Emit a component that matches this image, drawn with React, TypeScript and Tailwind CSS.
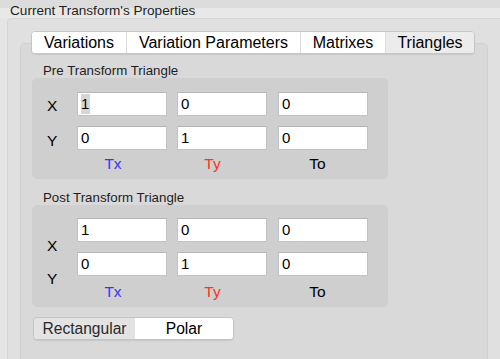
import React from 'react';

const tabs = [
  { label: 'Variations', w: 'w-[95px]' },
  { label: 'Variation Parameters', w: 'w-[174px]' },
  { label: 'Matrixes', w: 'w-[85px]' },
  { label: 'Triangles', w: 'w-[88px]', active: true },
];

function Field({ value, selected }: { value: string; selected?: boolean }) {
  return (
    <div className="h-[24px] w-[90px] shrink-0 bg-white border border-[#c3c3c3] border-t-[#b4b4b4] pl-[3px] text-[15px] leading-[22px] text-black">
      {selected ? <span className="inline-block bg-[#d6d6d6] leading-[20px] pr-[1px]">{value}</span> : value}
    </div>
  );
}

function TriangleBox({
  rows,
  padTop,
  labelTop,
  labelGap,
  axisGap,
  height,
}: {
  rows: string[][];
  padTop: string;
  labelTop: string;
  labelGap: string;
  axisGap: string;
  height: string;
}) {
  return (
    <div className={`ml-[11px] w-[356px] ${height} bg-[#cfcfcf] rounded-[5px] flex pl-[15px]`}>
      <div className={`w-[30px] flex flex-col text-[15.5px] leading-[18px] ${labelTop}`}>
        <span>X</span>
        <span className={labelGap}>Y</span>
      </div>
      <div className={`flex flex-col ${padTop}`}>
        {rows.map((r, i) => (
          <div key={i} className={`flex ${i > 0 ? 'mt-[10px]' : ''}`}>
            <Field value={r[0]} selected={r[3] === 'sel'} />
            <div className="ml-[10px]">
              <Field value={r[1]} />
            </div>
            <div className="ml-[11px]">
              <Field value={r[2]} />
            </div>
          </div>
        ))}
        <div className={`flex text-[15.5px] leading-[18px] ${axisGap}`}>
          <span className="w-[90px] text-center pr-[18px] text-[#3434ff]">Tx</span>
          <span className="ml-[10px] w-[90px] text-center pr-[19px] text-[#ff3322]">Ty</span>
          <span className="ml-[11px] w-[90px] text-center pr-[11px] text-black">To</span>
        </div>
      </div>
    </div>
  );
}

export default function App() {
  return (
    <div className="w-[500px] h-[359px] overflow-hidden bg-[#e5e5e5] font-['Liberation_Sans',Arial,sans-serif] text-black flex flex-col">
      <div className="h-[18px] shrink-0 pl-[10px] pt-[3px] text-[13.6px] leading-[15px] text-[#1e1e1e] bg-[linear-gradient(#dcdcdc_8px,#e8e8e8_8px)]">
        Current Transform's Properties
      </div>

      <div className="flex-1 ml-[7px] bg-[#e0e0e0] rounded-tl-[5px] border-t border-l border-[#d6d6d6] pl-[12px] pt-[24px] flex flex-col">
        <div className="flex-1 w-[468px] bg-[#d9d9d9] border border-b-0 border-[#d0d0d0] rounded-t-[5px] flex flex-col">
          <div className="-mt-[13px] ml-[10px] self-start flex h-[23px] rounded-[4px] border border-[#c6c6c6] bg-white shadow-[0_1px_1px_rgba(0,0,0,0.08)] overflow-hidden">
            {tabs.map((t, i) => (
              <div
                key={t.label}
                className={`${t.w} flex items-center justify-center text-[16px] leading-[21px] ${i < tabs.length - 1 ? 'border-r border-[#dcdcdc]' : ''} ${t.active ? 'bg-[#ececec]' : 'bg-white'}`}
              >
                {t.label}
              </div>
            ))}
          </div>

          <div className="mt-[9px] ml-[22px] text-[13.3px] leading-[15px] text-[#1e1e1e]">Pre Transform Triangle</div>
          <TriangleBox
            rows={[
              ['1', '0', '0', 'sel'],
              ['0', '1', '0'],
            ]}
            height="h-[101px]"
            padTop="pt-[14px]"
            labelTop="pt-[19px]"
            labelGap="mt-[17px]"
            axisGap="mt-[5px]"
          />

          <div className="mt-[11px] ml-[22px] text-[13.3px] leading-[15px] text-[#1e1e1e]">Post Transform Triangle</div>
          <TriangleBox
            rows={[
              ['1', '0', '0'],
              ['0', '1', '0'],
            ]}
            height="h-[102px]"
            padTop="pt-[13px]"
            labelTop="pt-[32px]"
            labelGap="mt-[15px]"
            axisGap="mt-[7px]"
          />

          <div className="mt-[10px] ml-[12px] self-start flex h-[23px] w-[201px] rounded-[4px] border border-[#c4c4c4] overflow-hidden shadow-[0_1px_1px_rgba(0,0,0,0.08)] text-[15.6px] leading-[21px]">
            <div className="w-[101px] flex items-center justify-center bg-[#e3e3e3] text-[#2a2a2a]">Rectangular</div>
            <div className="flex-1 flex items-center justify-center bg-white">Polar</div>
          </div>
        </div>
      </div>
    </div>
  );
}
